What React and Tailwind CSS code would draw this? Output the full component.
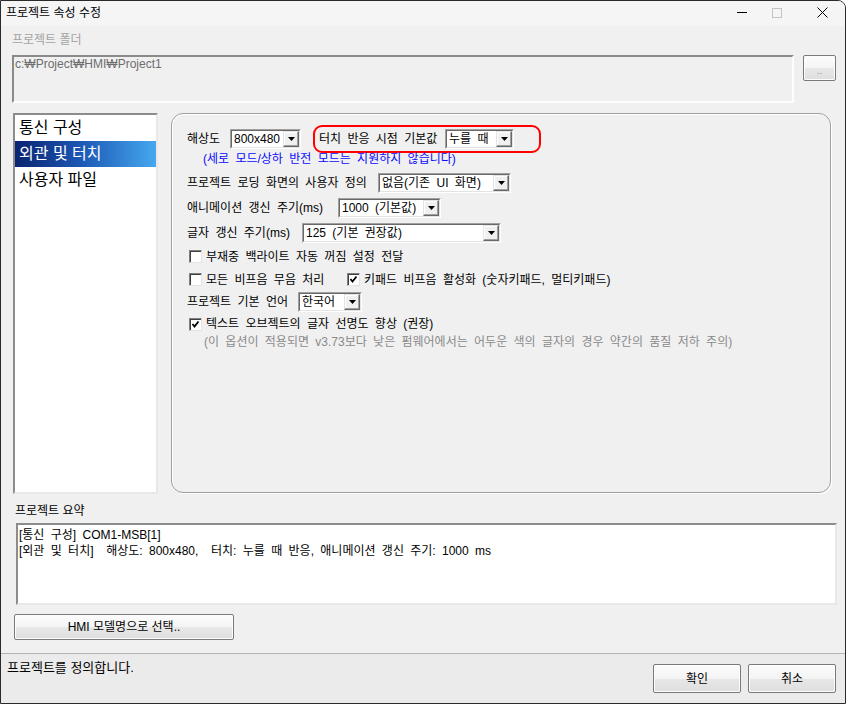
import React from "react";

function Arrow() {
  return (
    <svg width="7" height="4" viewBox="0 0 7 4">
      <polygon points="0,0 7,0 3.5,4" fill="#000" />
    </svg>
  );
}

function Select({ w, value }) {
  return (
    <div className={w + " h-[20px] flex border border-[#a0a0a0] border-r-white border-b-white shrink-0"}>
      <div className="flex-1 flex border border-[#696969] border-r-[#e3e3e3] border-b-[#e3e3e3] bg-white min-w-0">
        <span className="flex-1 pl-[2px] leading-[16px] text-[12px] whitespace-nowrap overflow-hidden">{value}</span>
        <div className="w-[16px] h-[16px] flex items-center justify-center bg-[#f0f0f0] border border-[#e3e3e3] border-r-[#696969] border-b-[#696969] shadow-[inset_-1px_-1px_0_#a0a0a0,inset_1px_1px_0_#fff]">
          <Arrow />
        </div>
      </div>
    </div>
  );
}

function Check({ checked }) {
  return (
    <div className="w-[13px] h-[13px] shrink-0 bg-white border border-[#808080] border-r-[#e3e3e3] border-b-[#e3e3e3] shadow-[inset_1px_1px_0_#404040] flex items-center justify-center">
      {checked ? (
        <svg width="9" height="9" viewBox="0 0 9 9">
          <polyline points="1.5,4 3.5,6.5 7.5,1.5" fill="none" stroke="#000" strokeWidth="1.8" />
        </svg>
      ) : null}
    </div>
  );
}

function Btn({ className = "", children }) {
  return (
    <div
      className={
        "flex items-center justify-center rounded-[2px] border border-[#7a7a7a] bg-[linear-gradient(#fcfcfc_0%,#f4f4f4_50%,#e8e8e8_50%,#dedede_100%)] text-[12px] shadow-[inset_0_0_0_1px_#fcfcfc] " +
        className
      }
    >
      {children}
    </div>
  );
}

export default function App() {
  return (
    <div className="w-[846px] h-[704px] flex flex-col overflow-hidden bg-[#f0f0f0] border border-[#2a2a2a] rounded-tr-[8px] font-['Liberation_Sans','Noto_Sans_CJK_KR',sans-serif] text-black">
      {/* title bar */}
      <div className="h-[25px] shrink-0 flex items-center bg-[#f5f5f5] pl-[5px] pb-[2px]">
        <span className="text-[12px] leading-[14px]">프로젝트 속성 수정</span>
        <div className="ml-auto flex items-center h-full">
          <div className="w-[10px] h-px bg-black mr-[25px]" />
          <div className="w-[10px] h-[10px] border border-[#c4c4c4] mr-[35px]" />
          <svg width="11" height="11" viewBox="0 0 11 11" className="mr-[17px]">
            <path d="M0.5 0.5 L10.5 10.5 M10.5 0.5 L0.5 10.5" stroke="#000" strokeWidth="1" />
          </svg>
        </div>
      </div>

      <div className="flex-1 flex flex-col pl-[11px]">
        {/* folder */}
        <div className="mt-[7px] h-[14px] leading-[14px] text-[12px] text-[#a3a3a3]">프로젝트 폴더</div>
        <div className="mt-[8px] flex items-start">
          <div className="w-[782px] h-[48px] border-2 border-[#8a8a8a] border-r-[#fdfdfd] border-b-[#fdfdfd] bg-[#f0f0f0] pl-[1px] text-[12px] leading-[14px] text-[#6d6d6d] [word-spacing:3px]">
            c:₩Project₩HMI₩Project1
          </div>
          <Btn className="ml-[9px] w-[33px] h-[26px] text-[#9a9a9a] items-end pb-[4px]">
            <span className="text-[10px] leading-[10px]">..</span>
          </Btn>
        </div>

        {/* main */}
        <div className="mt-[10px] flex h-[381px]">
          <div className="ml-[1px] w-[145px] h-full border-2 border-[#8c8c8c] border-r-[#e8e8e8] border-b-[#e8e8e8] bg-white text-[16px] leading-[26px]">
            <div className="h-[26px] pl-[4px]">통신 구성</div>
            <div className="h-[26px] pl-[4px] text-white bg-[linear-gradient(90deg,#0a2470_0%,#1b55b2_45%,#45a8ef_100%)]">외관 및 터치</div>
            <div className="h-[26px] pl-[4px]">사용자 파일</div>
          </div>

          <div className="ml-[13px] w-[660px] h-[380px] rounded-[12px] border border-[#a0a0a0] shadow-[inset_1px_1px_0_#fff,1px_1px_0_#fff] pl-[15px] pt-[11px] text-[12px] [word-spacing:3px]">
            <div className="h-[28px] flex items-center">
              <span className="w-[43px] whitespace-nowrap">해상도</span>
              <Select w="w-[71px]" value="800x480" />
              <div className="ml-[12px] w-[228px] h-[28px] flex items-center rounded-[9px] border-2 border-[#ff0000] pl-[4px]">
                <span className="w-[126px] whitespace-nowrap">터치 반응 시점 기본값</span>
                <Select w="w-[69px]" value="누를 때" />
              </div>
            </div>
            <div className="h-[17px] leading-[12px] pl-[16px] text-[#0a0aff] whitespace-nowrap">(세로 모드/상하 반전 모드는 지원하지 않습니다)</div>
            <div className="h-[25px] flex items-center">
              <span className="w-[191px] whitespace-nowrap">프로젝트 로딩 화면의 사용자 정의</span>
              <Select w="w-[133px]" value="없음(기존 UI 화면)" />
            </div>
            <div className="h-[25px] flex items-center">
              <span className="w-[151px] whitespace-nowrap">애니메이션 갱신 주기(ms)</span>
              <Select w="w-[103px]" value="1000 (기본값)" />
            </div>
            <div className="h-[25px] flex items-center">
              <span className="w-[115px] whitespace-nowrap">글자 갱신 주기(ms)</span>
              <Select w="w-[199px]" value="125 (기본 권장값)" />
            </div>
            <div className="h-[23px] flex items-center pl-[2px]">
              <Check />
              <span className="ml-[4px] whitespace-nowrap">부재중 백라이트 자동 꺼짐 설정 전달</span>
            </div>
            <div className="h-[23px] flex items-center pl-[2px]">
              <Check />
              <span className="ml-[4px] w-[141px] whitespace-nowrap">모든 비프음 무음 처리</span>
              <Check checked />
              <span className="ml-[4px] whitespace-nowrap">키패드 비프음 활성화 (숫자키패드, 멀티키패드)</span>
            </div>
            <div className="h-[21px] flex items-center">
              <span className="w-[111px] whitespace-nowrap">프로젝트 기본 언어</span>
              <Select w="w-[64px]" value="한국어" />
            </div>
            <div className="h-[24px] flex items-center pl-[2px]">
              <Check checked />
              <span className="ml-[4px] whitespace-nowrap">텍스트 오브젝트의 글자 선명도 향상 (권장)</span>
            </div>
            <div className="h-[14px] leading-[12px] pl-[17px] text-[#8a8a8a] whitespace-nowrap">
              (이 옵션이 적용되면 v3.73보다 낮은 펌웨어에서는 어두운 색의 글자의 경우 약간의 품질 저하 주의)
            </div>
          </div>
        </div>

        {/* summary */}
        <div className="mt-[10px] h-[14px] leading-[14px] text-[12px] pl-[3px]">프로젝트 요약</div>
        <div className="mt-[5px] ml-[4px] w-[821px] h-[82px] border-2 border-[#8c8c8c] border-r-[#e8e8e8] border-b-[#e8e8e8] bg-white pl-[1px] pt-[2px] text-[12px] leading-[16px] [word-spacing:3px] whitespace-pre">
          <div>[통신 구성] COM1-MSB[1]</div>
          <div>[외관 및 터치]  해상도: 800x480,  터치: 누를 때 반응, 애니메이션 갱신 주기: 1000 ms</div>
        </div>
        <Btn className="mt-[9px] ml-[2px] w-[220px] h-[26px]">HMI 모델명으로 선택..</Btn>
      </div>

      {/* status area */}
      <div className="h-[50px] shrink-0 mt-[12px] border-t border-[#b4b4b4] bg-[#ebebeb] flex items-start justify-between pr-[9px]">
        <span className="pl-[6px] pt-[7px] text-[13px] leading-[14px]">프로젝트를 정의합니다.</span>
        <div className="pt-[10px] flex gap-[7px]">
          <Btn className="w-[88px] h-[29px]">확인</Btn>
          <Btn className="w-[88px] h-[29px]">취소</Btn>
        </div>
      </div>
    </div>
  );
}
